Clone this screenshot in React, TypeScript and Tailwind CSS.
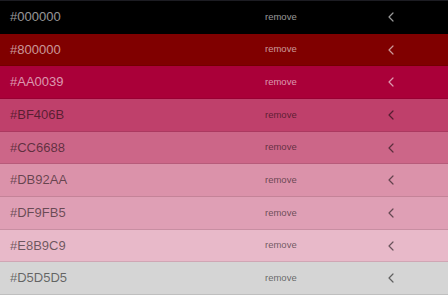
import React from "react";

const colors: { hex: string; dark: boolean }[] = [
  { hex: "#000000", dark: true },
  { hex: "#800000", dark: true },
  { hex: "#AA0039", dark: true },
  { hex: "#BF406B", dark: false },
  { hex: "#CC6688", dark: false },
  { hex: "#DB92AA", dark: false },
  { hex: "#DF9FB5", dark: false },
  { hex: "#E8B9C9", dark: false },
  { hex: "#D5D5D5", dark: false },
];

function Chevron({ className }: { className: string }) {
  return (
    <svg width="8" height="10" viewBox="0 0 8 10" className={className} fill="none">
      <path d="M6 1 L2 5 L6 9" stroke="currentColor" strokeWidth="1.2" strokeLinecap="round" strokeLinejoin="round" />
    </svg>
  );
}

export default function App() {
  return (
    <div
      className="flex h-[295px] w-[448px] flex-col overflow-hidden border-t border-[#1c1c22]"
      style={{ fontFamily: '"Liberation Sans", Arial, sans-serif' }}
    >
      {colors.map((c) => {
        const txt = c.dark ? "text-white/60" : "text-black/55";
        return (
          <div
            key={c.hex}
            className="flex flex-1 items-center border-b border-black/10"
            style={{ backgroundColor: c.hex }}
          >
            <div className={`w-[265px] pl-[10px] text-[13px] ${txt}`}>{c.hex}</div>
            <div className={`w-[122px] text-[9.5px] ${txt}`}>remove</div>
            <Chevron className={txt} />
          </div>
        );
      })}
    </div>
  );
}
